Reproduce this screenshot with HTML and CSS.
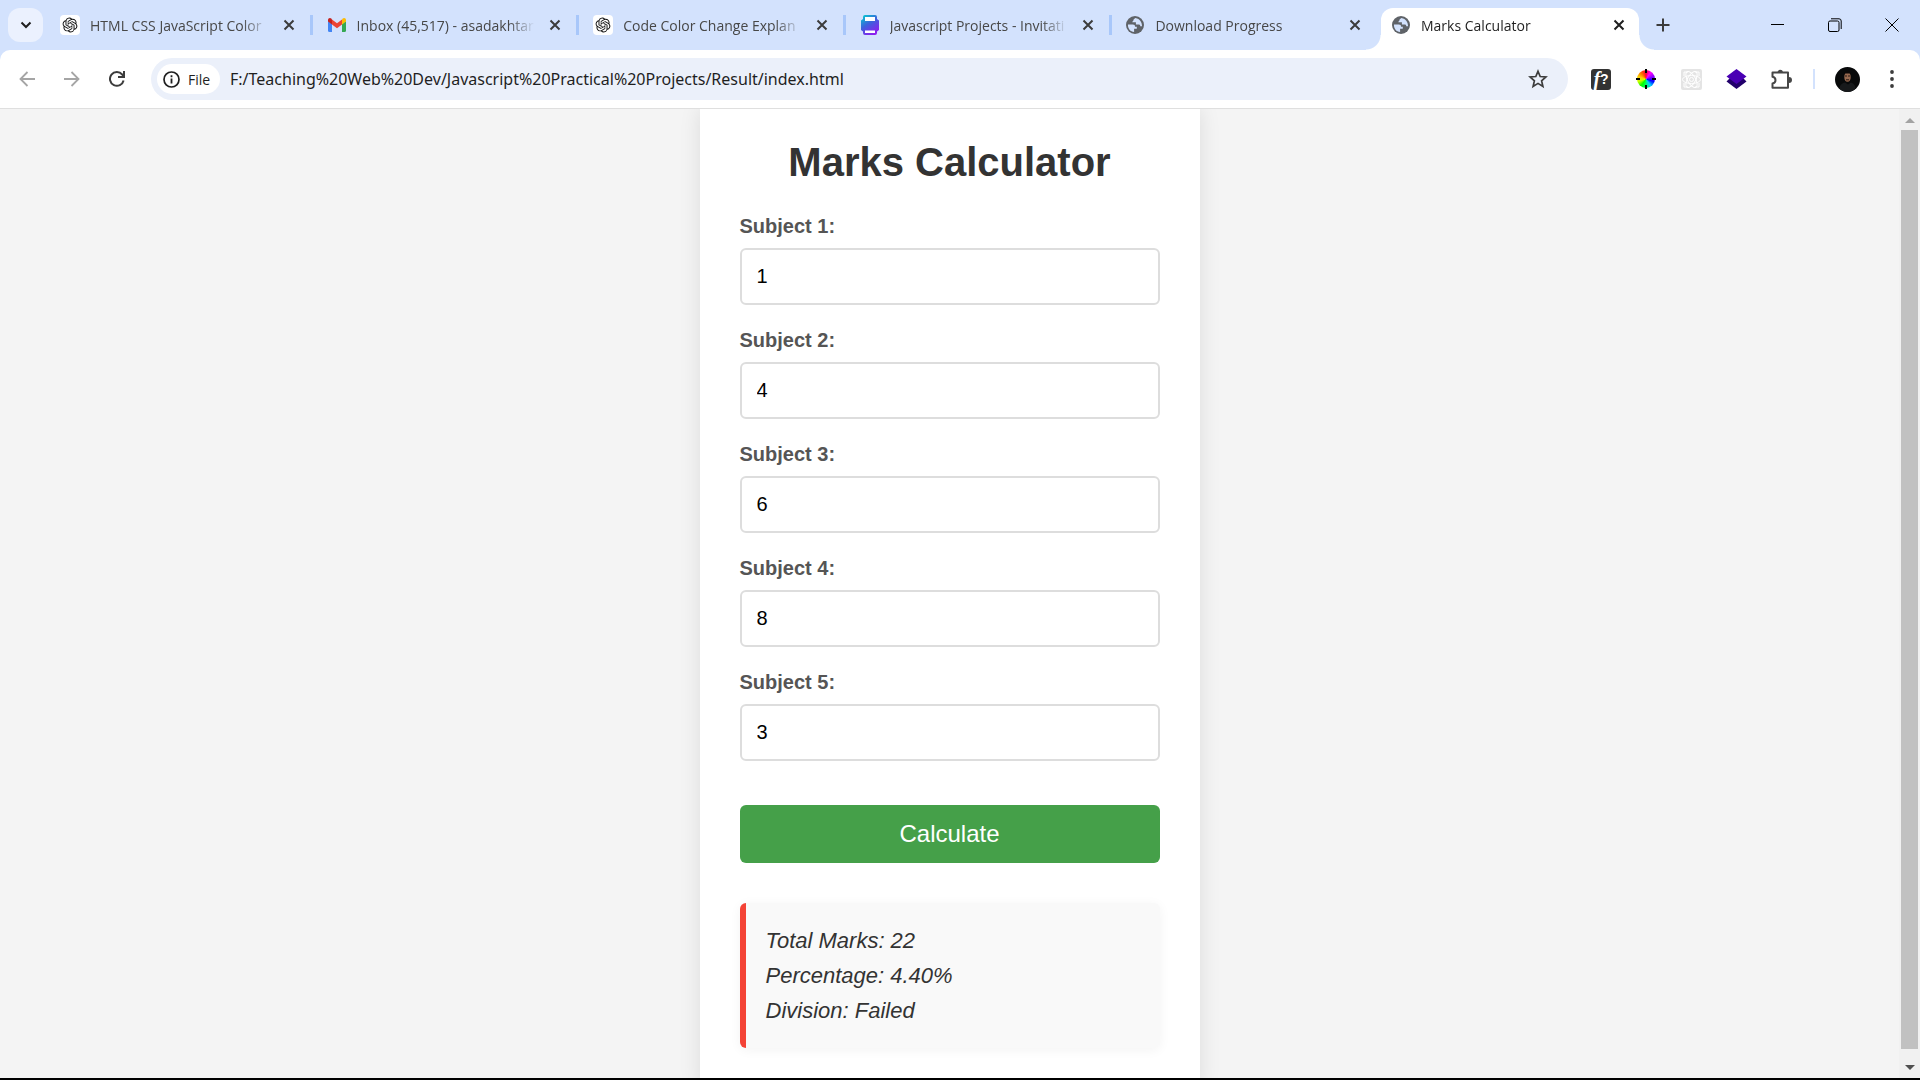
FILE: index.html
```html
<!DOCTYPE html>
<html lang="en">
<head>
<meta charset="utf-8">
<title>Marks Calculator</title>
<link rel="stylesheet" href="styles.css">
</head>
<body>
<svg class="defs" aria-hidden="true">
  <defs>
    <symbol id="close" viewBox="0 0 12 12"><path d="M1.5 1.5l9 9M10.500 1.500l-9 9" fill="none" stroke="currentColor" stroke-width="2"/></symbol>
    <symbol id="globe" viewBox="2 2 20 20"><path fill="#5f6368" d="M12 2a10 10 0 1 0 0 20 10 10 0 0 0 0-20z"/><path class="globe-land" d="M4.200 11.500h5.300c2 0 2.500 1 2.500 2.500h2v2.300h-3v3.500c-4 0-7.200-4-6.800-8.300zM12.500 4.100c-1 1-2.200 1-2.200 2.400 0 1.500-1.300 1-1.300 2.500h4v2.500h3.500c1 0 1.300.8 1.300 2h2c.1-4.600-2.300-8.600-7.300-9.400z"/></symbol>
    <symbol id="knot" viewBox="0 0 20 20"><rect width="20" height="20" rx="4" fill="#fff"/><path transform="translate(2.600 2.600) scale(.617)" fill="#111" d="M22.2819 9.8211a5.9847 5.9847 0 0 0-.5157-4.9108 6.0462 6.0462 0 0 0-6.5098-2.9A6.0651 6.0651 0 0 0 4.9807 4.1818a5.9847 5.9847 0 0 0-3.9977 2.9 6.0462 6.0462 0 0 0 .7427 7.0966 5.98 5.98 0 0 0 .511 4.9107 6.051 6.051 0 0 0 6.5146 2.9001A5.9847 5.9847 0 0 0 13.2599 24a6.0557 6.0557 0 0 0 5.7718-4.2058 5.9894 5.9894 0 0 0 3.9977-2.9001 6.0557 6.0557 0 0 0-.7475-7.0729zm-9.022 12.6081a4.4755 4.4755 0 0 1-2.8764-1.0408l.1419-.0804 4.7783-2.7582a.7948.7948 0 0 0 .3927-.6813v-6.7369l2.02 1.1686a.071.071 0 0 1 .038.052v5.5826a4.504 4.504 0 0 1-4.4945 4.4944zm-9.6607-4.1254a4.4708 4.4708 0 0 1-.5346-3.0137l.142.0852 4.783 2.7582a.7712.7712 0 0 0 .7806 0l5.8428-3.3685v2.3324a.0804.0804 0 0 1-.0332.0615L9.74 19.9502a4.4992 4.4992 0 0 1-6.1408-1.6464zM2.3408 7.8956a4.485 4.485 0 0 1 2.3655-1.9728V11.6a.7664.7664 0 0 0 .3879.6765l5.8144 3.3543-2.0201 1.1685a.0757.0757 0 0 1-.071 0l-4.8303-2.7865A4.504 4.504 0 0 1 2.3408 7.872zm16.5963 3.8558L13.1038 8.364 15.1192 7.2a.0757.0757 0 0 1 .071 0l4.8303 2.7913a4.4944 4.4944 0 0 1-.6765 8.1042v-5.6772a.79.79 0 0 0-.407-.667zm2.0107-3.0231l-.142-.0852-4.7735-2.7818a.7759.7759 0 0 0-.7854 0L9.409 9.2297V6.8974a.0662.0662 0 0 1 .0284-.0615l4.8303-2.7866a4.4992 4.4992 0 0 1 6.6802 4.66zM8.3065 12.863l-2.02-1.1638a.0804.0804 0 0 1-.038-.0567V6.0742a4.4992 4.4992 0 0 1 7.3757-3.4537l-.142.0805L8.704 5.459a.7948.7948 0 0 0-.3927.6813zm1.0976-2.3654l2.602-1.4998 2.6069 1.4998v2.9994l-2.5974 1.4997-2.6067-1.4997Z"/></symbol>
    <linearGradient id="ink" x1="0" y1="0" x2=".6" y2="1"><stop offset="0" stop-color="#00d5cf"/><stop offset=".5" stop-color="#3b62dc"/><stop offset="1" stop-color="#8b20ee"/></linearGradient>
  </defs>
</svg>

<header class="browser">
  <div class="strip">
    <button class="search-tabs" aria-label="Search tabs"><svg width="12" height="8" viewBox="0 0 12 8"><path d="M1.500 1.500L6 6l4.500-4.500" fill="none" stroke="#1f1f1f" stroke-width="2"/></svg></button>
    <nav class="tabs" aria-label="Open tabs">
      <div class="tab"><svg class="favicon"><use href="#knot"/></svg><a class="tab-title" href="#">HTML CSS JavaScript Color</a><button class="tab-close" aria-label="Close tab"><svg width="12" height="12"><use href="#close"/></svg></button></div>
      <div class="tab"><svg class="favicon" viewBox="0 0 20 20"><path fill="#4285f4" d="M1 6l4 3v8H2.500A1.500 1.500 0 0 1 1 15.500z"/><path fill="#34a853" d="M19 6l-4 3v8h2.500a1.500 1.500 0 0 0 1.500-1.500z"/><path fill="#fbbc04" d="M15 4.500v5l4-3V5c0-2-2-2.700-3.300-1.600z"/><path fill="#ea4335" d="M5 9.500v-5l5 3.800 5-3.800v5l-5 3.800z"/><path fill="#c5221f" d="M1 5v1.500l4 3v-5l-.7-1.100C3 2.300 1 3 1 5z"/></svg><a class="tab-title" href="#">Inbox (45,517) - asadakhtar</a><button class="tab-close" aria-label="Close tab"><svg width="12" height="12"><use href="#close"/></svg></button></div>
      <div class="tab"><svg class="favicon"><use href="#knot"/></svg><a class="tab-title" href="#">Code Color Change Explan</a><button class="tab-close" aria-label="Close tab"><svg width="12" height="12"><use href="#close"/></svg></button></div>
      <div class="tab"><svg class="favicon" viewBox="0 0 20 20"><path fill="url(#ink)" d="M5 0h10a2 2 0 0 1 2 2v2l2 1.500v9.500l-2 1.500v1.500a2 2 0 0 1-2 2H5a2 2 0 0 1-2-2v-1.500L1 15V5.500L3 4V2a2 2 0 0 1 2-2z"/><path fill="#fff" d="M5 2h10v4H5zM5 15.500h10v2.500H5z"/></svg><a class="tab-title" href="#">Javascript Projects - Invitati</a><button class="tab-close" aria-label="Close tab"><svg width="12" height="12"><use href="#close"/></svg></button></div>
      <div class="tab tab-last"><svg class="favicon globe"><use href="#globe"/></svg><a class="tab-title" href="#">Download Progress</a><button class="tab-close" aria-label="Close tab"><svg width="12" height="12"><use href="#close"/></svg></button></div>
    </nav>
    <div class="tab tab-active"><svg class="favicon globe"><use href="#globe"/></svg><a class="tab-title" href="#" aria-current="page">Marks Calculator</a><button class="tab-close" aria-label="Close tab"><svg width="12" height="12"><use href="#close"/></svg></button></div>
    <button class="new-tab" aria-label="New tab"><svg width="14" height="14" viewBox="0 0 14 14"><path d="M7 .5v13M.5 7h13" stroke="#3c3c3c" stroke-width="2"/></svg></button>
    <div class="window-controls">
      <button aria-label="Minimize"><svg width="14" height="14" viewBox="0 0 14 14"><path d="M0 6.500h13" stroke="#000"/></svg></button>
      <button aria-label="Restore"><svg width="14" height="14" viewBox="0 0 14 14"><rect x=".5" y="3" width="10.500" height="10.500" rx="1.500" fill="none" stroke="#000"/><path d="M3 .8h8a2.200 2.200 0 0 1 2.200 2.200v8" fill="none" stroke="#000"/></svg></button>
      <button aria-label="Close window"><svg width="14" height="14" viewBox="0 0 14 14"><path d="M.5.5l13 13M13.500.5l-13 13" stroke="#000"/></svg></button>
    </div>
  </div>

  <div class="toolbar">
    <div class="nav-buttons">
      <button aria-label="Back"><svg width="16" height="16" viewBox="0 0 16 16"><path d="M16 8H1.500M8.500 1L1.500 8l7 7" fill="none" stroke="#a5a5a5" stroke-width="1.800"/></svg></button>
      <button aria-label="Forward"><svg width="16" height="16" viewBox="0 0 16 16"><path d="M0 8h14.500M7.500 1l7 7-7 7" fill="none" stroke="#a5a5a5" stroke-width="1.800"/></svg></button>
      <button aria-label="Reload"><svg width="16" height="16" viewBox="0 0 16 16"><path d="M14.600 9.500A6.900 6.900 0 1 1 13.200 3.500l1 1.400" fill="none" stroke="#3c3c3c" stroke-width="2"/><path d="M15 0v6H9" fill="none" stroke="#3c3c3c" stroke-width="2"/></svg></button>
    </div>
    <div class="address">
      <button class="chip"><svg width="17" height="17" viewBox="0 0 17 17"><circle cx="8.500" cy="8.500" r="7.500" fill="none" stroke="#1f1f1f" stroke-width="1.700"/><path d="M8.500 7.500v5M8.500 4.200v2" stroke="#1f1f1f" stroke-width="1.800"/></svg>File</button>
      <input class="url" aria-label="Address" value="F:/Teaching%20Web%20Dev/Javascript%20Practical%20Projects/Result/index.html">
      <button class="star" aria-label="Bookmark this tab"><svg width="20" height="20" viewBox="0 0 20 20"><path d="M10 2.300l2.200 5.200 5.700.5-4.300 3.800 1.300 5.600-4.900-3-4.900 3 1.300-5.600L2.100 8l5.700-.5z" fill="none" stroke="#3c3c3c" stroke-width="1.700"/></svg></button>
    </div>
    <div class="extensions">
      <button class="font-ext" aria-label="Font finder"><i>f</i>?</button>
      <button aria-label="Color picker"><span class="wheel"></span></button>
      <button aria-label="React tools"><svg width="21" height="21" viewBox="0 0 21 21"><rect width="21" height="21" rx="2" fill="#e4e4e4"/><g fill="none" stroke="#fff"><circle cx="10.500" cy="10.500" r="2"/><ellipse cx="10.500" cy="10.500" rx="9" ry="4"/><ellipse cx="10.500" cy="10.500" rx="9" ry="4" transform="rotate(60 10.500 10.500)"/><ellipse cx="10.500" cy="10.500" rx="9" ry="4" transform="rotate(120 10.500 10.500)"/><path d="M3 3h4M3 3v4M18 3h-4M18 3v4M3 18h4M3 18v-4M18 18h-4M18 18v-4"/></g></svg></button>
      <button aria-label="Layers"><svg width="21" height="20" viewBox="0 0 21 20"><path fill="#22006b" d="M.5 12.500L4 9h13l3.500 3.500-10 7.500z"/><path fill="#4a00b4" d="M10.500 0l10 7.500-10 7.500-10-7.500z"/></svg></button>
      <button aria-label="Extensions"><svg width="21" height="21" viewBox="0 0 21 21"><path d="M1.500 3.500H17v15.300H1.500v-4.300c4-.8 4-5.900 0-6.700z" fill="none" stroke="#474747" stroke-width="2" stroke-linejoin="round"/><path d="M6.500 3a2.800 2.800 0 0 1 5.500 0zM18 8a2.800 2.800 0 0 1 0 6z" fill="#474747"/></svg></button>
      <span class="divider"></span>
      <button aria-label="Profile"><svg width="25" height="25" viewBox="0 0 25 25"><clipPath id="round"><circle cx="12.500" cy="12.500" r="12.500"/></clipPath><g clip-path="url(#round)"><path fill="#08090a" d="M0 0h25v25H0z"/><path fill="#17191b" d="M4 25c0-7 3-9 6-9.500l3 2 3-2c3 1 5 3 5 9.500z"/><ellipse cx="12.500" cy="10" rx="3.200" ry="4.800" fill="#98694f"/><path fill="#0b0808" d="M9 8c-.5-5 7.500-5.500 7 0l-1-1.500h-5z"/><path stroke="#2a1a14" d="M10 9h2M13 9h2M11 12.800h3"/></g></svg></button>
      <button class="menu" aria-label="Menu"><svg width="4" height="18" viewBox="0 0 4 18"><g fill="#3c3c3c"><circle cx="2" cy="2" r="1.900"/><circle cx="2" cy="9" r="1.900"/><circle cx="2" cy="16" r="1.900"/></g></svg></button>
    </div>
  </div>
</header>

<div class="viewport">
  <main class="page">
    <form class="card">
      <h1>Marks Calculator</h1>
      <div class="field"><label for="s1">Subject 1:</label><input id="s1" type="text" inputmode="numeric" value="1"></div>
      <div class="field"><label for="s2">Subject 2:</label><input id="s2" type="text" inputmode="numeric" value="4"></div>
      <div class="field"><label for="s3">Subject 3:</label><input id="s3" type="text" inputmode="numeric" value="6"></div>
      <div class="field"><label for="s4">Subject 4:</label><input id="s4" type="text" inputmode="numeric" value="8"></div>
      <div class="field"><label for="s5">Subject 5:</label><input id="s5" type="text" inputmode="numeric" value="3"></div>
      <button class="calculate" type="button">Calculate</button>
      <output class="result" for="s1 s2 s3 s4 s5">Total Marks: 22<br>Percentage: 4.40%<br>Division: Failed</output>
    </form>
  </main>
  <div class="scrollbar" aria-hidden="true">
    <svg width="10" height="5" viewBox="0 0 10 5"><path fill="#a3a3a3" d="M5 0l5 5H0z"/></svg>
    <div class="thumb"></div>
    <svg width="10" height="5" viewBox="0 0 10 5"><path fill="#505050" d="M5 5L0 0h10z"/></svg>
  </div>
</div>
</body>
</html>
```
FILE: styles.css
```css
* { box-sizing: border-box; }

body {
  margin: 0;
  height: 100vh;
  display: flex;
  flex-direction: column;
  overflow: hidden;
  background: #f4f4f4;
  border-bottom: 2px solid #000;
  font-family: "Liberation Sans", Arial, sans-serif;
}

button {
  display: flex;
  align-items: center;
  justify-content: center;
  padding: 0;
  border: 0;
  background: none;
  font: inherit;
  color: inherit;
}

svg { display: block; flex: none; }
.defs { position: absolute; width: 0; height: 0; }

/* Browser window */
.browser {
  flex: none;
  background: #d3e2fd;
  font-family: "Open Sans", "Noto Sans", sans-serif;
  color: #1f1f1f;
}

.strip {
  display: flex;
  align-items: center;
  height: 50px;
  padding-left: 8px;
}

.search-tabs {
  flex: none;
  width: 35px;
  height: 34px;
  margin-right: 3px;
  border-radius: 12px;
  background: #ebf1fe;
}

.tabs {
  flex: 0 1 1333px;
  min-width: 0;
  display: flex;
}

.tab {
  position: relative;
  flex: 1 1 0;
  min-width: 0;
  display: flex;
  align-items: center;
  gap: 10px;
  height: 20px;
  padding: 0 15px 0 14px;
  border-right: 3px solid #a8c7fa;
  color: #474747;
}

.tab-last { border-color: transparent; }
.favicon { width: 20px; height: 20px; }
.globe { width: 18px; height: 18px; }
.globe + .tab-title { margin-left: 1px; }
.globe-land { fill: #d3e2fd; }

.tab-title {
  flex: 1;
  min-width: 0;
  padding-top: 2px;
  overflow: hidden;
  white-space: nowrap;
  font-size: 14px;
  line-height: 20px;
  color: inherit;
  text-decoration: none;
  mask-image: linear-gradient(to right, #000 85%, transparent);
}

.tab-close { width: 12px; height: 20px; margin-left: 4px; color: #3c3c3c; }

.tab-active {
  flex: 0 1 258px;
  align-self: flex-end;
  height: 42px;
  margin-left: 2px;
  padding: 0 14px 8px 11px;
  border: 0;
  border-radius: 12px 12px 0 0;
  background: #fff;
  color: #1f1f1f;
}

.tab-active::before,
.tab-active::after {
  content: "";
  position: absolute;
  bottom: 0;
  width: 15px;
  height: 15px;
}
.tab-active::before { right: 100%; background: radial-gradient(circle at 0 0, transparent 14px, #fff 15px); }
.tab-active::after { left: 100%; background: radial-gradient(circle at 100% 0, transparent 14px, #fff 15px); }
.tab-active .tab-close { color: #1f1f1f; }

.new-tab { flex: none; width: 34px; height: 34px; margin-left: 7px; }

.window-controls { display: flex; margin-left: auto; }
.window-controls button { width: 57px; height: 50px; }

.toolbar {
  display: flex;
  align-items: center;
  height: 59px;
  padding: 0 11px 0 10px;
  border-bottom: 1px solid #dfdfdf;
  border-radius: 10px 10px 0 0;
  background: #fff;
}

.nav-buttons { display: flex; gap: 11px; width: 141px; }
.nav-buttons button { width: 34px; height: 34px; }

.address {
  flex: 1;
  min-width: 0;
  display: flex;
  align-items: center;
  height: 42px;
  padding: 0 20px 0 6px;
  border-radius: 21px;
  background: #ebf0fa;
}

.chip {
  flex: none;
  gap: 8px;
  width: 63px;
  height: 30px;
  padding-right: 4px;
  border-radius: 15px;
  background: #fff;
  font-size: 14px;
}

.url {
  flex: 1;
  min-width: 0;
  padding: 0 0 0 10px;
  border: 0;
  outline: 0;
  background: none;
  font: 16px "Noto Sans", "Open Sans", sans-serif;
  color: #1f1f1f;
}

.extensions {
  display: flex;
  align-items: center;
  gap: 11px;
  margin-left: 16px;
}
.extensions button { width: 34px; height: 34px; }

.extensions .font-ext {
  width: 20px;
  height: 21px;
  margin: 0 7px;
  border-radius: 3px;
  background: #333;
  color: #fff;
  font: bold 14px "Liberation Sans", sans-serif;
}
.font-ext i { font: italic bold 20px/20px "Liberation Serif", serif; }

.wheel {
  position: relative;
  width: 18px;
  height: 18px;
  border-radius: 50%;
  background: conic-gradient(#f03, #f0f, #80f, #00f, #0cf, #0f6, #0f0, #cf0, #fc0, #f60, #f03);
}
.wheel::before,
.wheel::after {
  content: "";
  position: absolute;
  inset: -1px 8px;
  border: solid #000;
  border-width: 4px 0;
}
.wheel::after { inset: 8px -1px; border-width: 0 4px; }

.divider { width: 2px; height: 20px; margin: 0 4px; background: #d3e2fd; }

/* Page area */
.viewport { flex: 1; min-height: 0; display: flex; }

.page { flex: 1; min-width: 0; overflow: hidden; }

.card {
  width: 500px;
  max-width: 100%;
  min-height: 100%;
  margin: 0 auto;
  padding: 30px 40px 40px;
  background: #fff;
  box-shadow: 0 0 20px rgba(0, 0, 0, 0.1);
}

h1 {
  margin: 0 0 30px;
  font-size: 40px;
  line-height: 46px;
  text-align: center;
  color: #333;
}

.field { margin-bottom: 24px; }

.field label {
  display: block;
  margin-bottom: 10px;
  font-size: 20px;
  font-weight: bold;
  line-height: 23px;
  color: #555;
}

.field input {
  display: block;
  width: 100%;
  height: 57px;
  padding: 0 15px;
  border: 2px solid #ddd;
  border-radius: 6px;
  background: #fff;
  font: 20px "Liberation Sans", Arial, sans-serif;
  color: #000;
}

.calculate {
  width: 100%;
  height: 58px;
  margin: 44px 0 40px;
  border-radius: 6px;
  background: #45a049;
  font-size: 24px;
  color: #fff;
}

.result {
  display: block;
  padding: 20px;
  border-left: 6px solid #f44336;
  border-radius: 6px;
  background: #f9f9f9;
  box-shadow: 0 2px 12px rgba(0, 0, 0, 0.05);
  font-size: 22px;
  font-style: italic;
  line-height: 35px;
  color: #333;
}

.scrollbar {
  flex: none;
  width: 21px;
  display: flex;
  flex-direction: column;
  align-items: center;
  gap: 7px;
  padding: 9px 0 8px;
  background: #f1f1f1;
}
.thumb { flex: 1; width: 17px; margin-bottom: 9px; background: #c1c1c1; }
```
